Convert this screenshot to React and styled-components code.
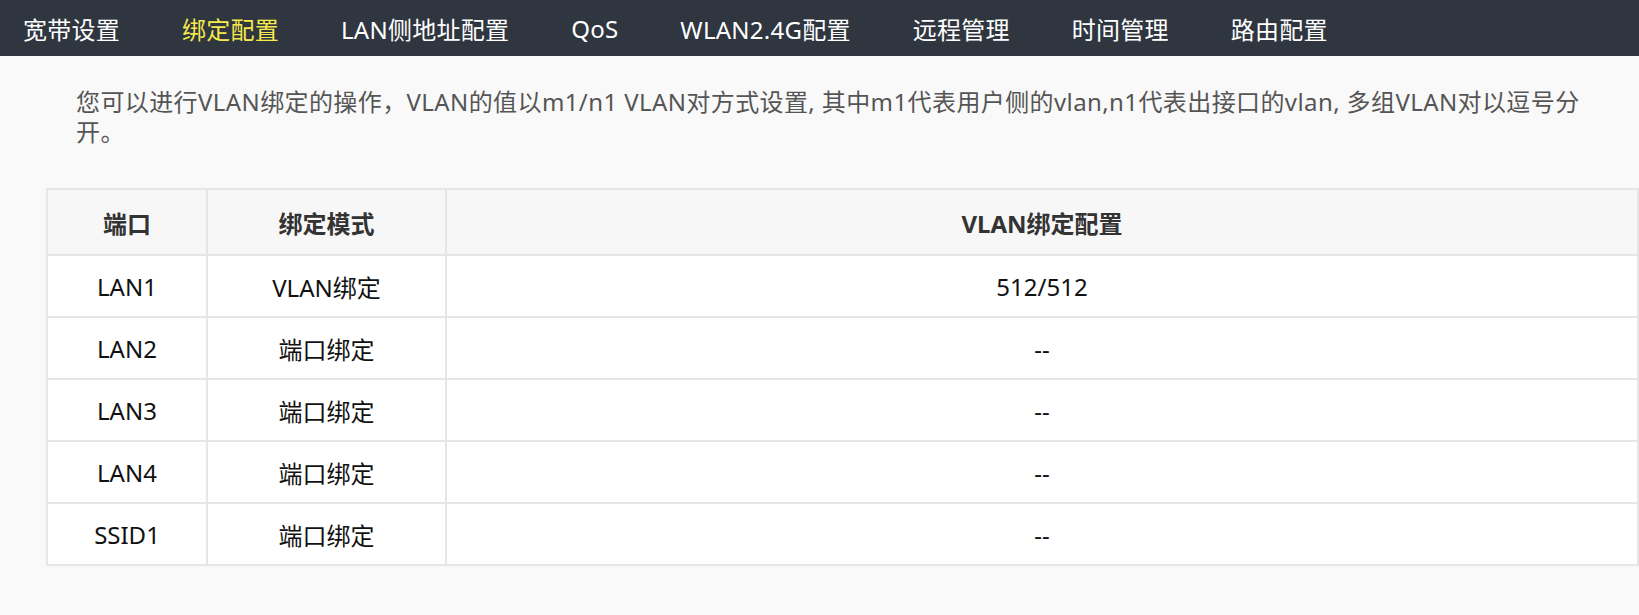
import React from 'react';
import styled, { createGlobalStyle } from 'styled-components';

const GlobalStyle = createGlobalStyle`
    html, body {
        margin: 0;
        padding: 0;
        background: #f9f9f9;
        font-family: "Noto Sans", "Noto Sans CJK SC", sans-serif;
    }
`;

const navItems = ["宽带设置", "绑定配置", "LAN侧地址配置", "QoS", "WLAN2.4G配置", "远程管理", "时间管理", "路由配置"];

const rows = [
    { port: "LAN1", mode: "VLAN绑定", config: "512/512" },
    { port: "LAN2", mode: "端口绑定", config: "--" },
    { port: "LAN3", mode: "端口绑定", config: "--" },
    { port: "LAN4", mode: "端口绑定", config: "--" },
    { port: "SSID1", mode: "端口绑定", config: "--" },
];

const NavBar = styled.nav`
    display: flex;
    align-items: center;
    gap: 62px;
    height: 56px;
    padding-left: 23px;
    background-color: #2f3640;
`;

const NavItem = styled.span`
    color: ${props => props.active ? "#f5e94c" : "#ffffff"};
    font-size: 24px;
    letter-spacing: 0.25px;
    white-space: nowrap;
    cursor: pointer;
`;

const Content = styled.main`
    padding: 31px 0 0 46px;
`;

const Description = styled.p`
    margin: 0 50px 0 30px;
    color: #555555;
    font-size: 24px;
    line-height: 30px;
    letter-spacing: 0.4px;
`;

const Table = styled.table`
    width: 100%;
    margin-top: 41px;
    border-collapse: collapse;
    border: 2px solid #e6e6e6;
    font-size: 24px;
`;

const HeadCell = styled.th`
    height: 64px;
    width: ${props => props.width ?? "auto"};
    padding: 0;
    background-color: #f7f7f7;
    border: 2px solid #e6e6e6;
    color: #333333;
    font-weight: bold;
    text-align: center;
`;

const Cell = styled.td`
    height: 60px;
    padding: 0;
    background-color: #ffffff;
    border: 2px solid #e6e6e6;
    color: #111111;
    text-align: center;
`;

const App = () => (
    <>
        <GlobalStyle />
        <NavBar>
            {navItems.map(item => (
                <NavItem key={item} active={item === "绑定配置"}>{item}</NavItem>
            ))}
        </NavBar>
        <Content>
            <Description>
                您可以进行VLAN绑定的操作，VLAN的值以m1/n1 VLAN对方式设置, 其中m1代表用户侧的vlan,n1代表出接口的vlan, 多组VLAN对以逗号分开。
            </Description>
            <Table>
                <thead>
                    <tr>
                        <HeadCell width="158px">端口</HeadCell>
                        <HeadCell width="237px">绑定模式</HeadCell>
                        <HeadCell>VLAN绑定配置</HeadCell>
                    </tr>
                </thead>
                <tbody>
                    {rows.map(row => (
                        <tr key={row.port}>
                            <Cell>{row.port}</Cell>
                            <Cell>{row.mode}</Cell>
                            <Cell>{row.config}</Cell>
                        </tr>
                    ))}
                </tbody>
            </Table>
        </Content>
    </>
);

export default App;
